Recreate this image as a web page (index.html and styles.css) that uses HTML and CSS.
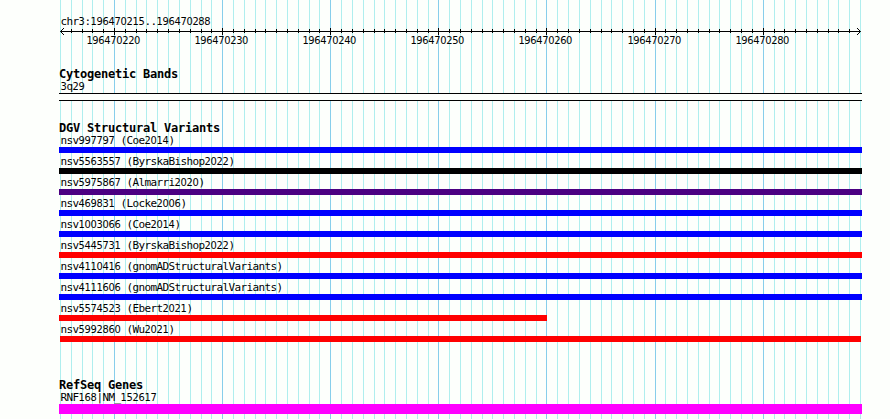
FILE: index.html
```html
<!DOCTYPE html>
<html lang="en">
<head>
    <meta charset="UTF-8">
    <title>chr3:196470215..196470288</title>
    <link rel="stylesheet" href="styles.css">
</head>
<body>
    <div class="browser">
        <svg class="grid" id="grid" width="890" height="419" shape-rendering="crispEdges"></svg>

        <div class="panel">
            <div class="region">chr<span class="num">3</span>:<span class="num">196470215</span>..<span class="num">196470288</span></div>
            <svg class="ruler" id="ruler" width="803" height="20">
                <path class="arrow" d="M1.5 4.5h800M5 1L1.5 4.5L5 8M798 1l3.5 3.5L798 8"/>
            </svg>

            <div class="track cytoband">
                <h2>Cytogenetic Bands</h2>
                <div class="label"><span class="num">3</span>q<span class="num">29</span></div>
                <div class="band"></div>
            </div>

            <div class="track variants">
                <h2>DGV Structural Variants</h2>
                <div class="label">nsv<span class="num">997797</span> (Coe<span class="num">2014</span>)</div>
                <div class="bar gain"></div>
                <div class="label">nsv<span class="num">5563557</span> (ByrskaBishop<span class="num">2022</span>)</div>
                <div class="bar other"></div>
                <div class="label">nsv<span class="num">5975867</span> (Almarri<span class="num">2020</span>)</div>
                <div class="bar inversion"></div>
                <div class="label">nsv<span class="num">469831</span> (Locke<span class="num">2006</span>)</div>
                <div class="bar gain"></div>
                <div class="label">nsv<span class="num">1003066</span> (Coe<span class="num">2014</span>)</div>
                <div class="bar gain"></div>
                <div class="label">nsv<span class="num">5445731</span> (ByrskaBishop<span class="num">2022</span>)</div>
                <div class="bar loss"></div>
                <div class="label">nsv<span class="num">4110416</span> (gnomADStructuralVariants)</div>
                <div class="bar gain"></div>
                <div class="label">nsv<span class="num">4111606</span> (gnomADStructuralVariants)</div>
                <div class="bar gain"></div>
                <div class="label">nsv<span class="num">5574523</span> (Ebert<span class="num">2021</span>)</div>
                <div class="bar loss partial"></div>
                <div class="label">nsv<span class="num">5992860</span> (Wu<span class="num">2021</span>)</div>
                <div class="bar loss inner"></div>
            </div>

            <div class="track genes">
                <h2>RefSeq Genes</h2>
                <div class="label">RNF<span class="num">168</span>|NM_<span class="num">152617</span></div>
                <div class="bar gene"></div>
            </div>
        </div>
    </div>

    <script src="ruler.js"></script>
</body>
</html>
```
FILE: styles.css
```css
body {
    margin: 0;
    background-color: #fdfffc;
    color: #000;
    font-family: "DejaVu Sans Mono", monospace;
    font-size: 11px;
}
.browser {
    position: relative;
    width: 890px;
    height: 419px;
    overflow: hidden;
}
.grid {
    position: absolute;
    top: 0;
    left: 0;
}
.minor {
    fill: #afeeee;
}
.major {
    fill: #87ceeb;
}
.panel {
    position: relative;
    width: 803px;
    padding: 14px 0 0 59px;
}
.region, .label {
    padding-left: 1.4px;
    letter-spacing: -0.62px;
    white-space: pre;
}
.region {
    height: 13px;
    line-height: 15px;
}
.label {
    height: 15px;
    line-height: 18px;
}
/* plain zeros, kept on the same 6px pitch */
.num {
    font-family: "DejaVu Sans Condensed", "DejaVu Sans", sans-serif;
    font-stretch: condensed;
    letter-spacing: -0.3px;
}
.ruler {
    display: block;
}
.ruler text {
    font-family: "DejaVu Sans Condensed", "DejaVu Sans", sans-serif;
    font-stretch: condensed;
    font-size: 11px;
}
.arrow {
    fill: none;
    stroke: #000;
    stroke-width: 1;
}
h2 {
    margin: 0;
    height: 12px;
    line-height: 16px;
    font-size: 12px;
    font-weight: bold;
    letter-spacing: -0.22px;
}
.cytoband {
    padding-top: 19px;
}
.band {
    height: 6px;
    background-color: #fdfffc;
    border-top: 1px solid #000;
    border-bottom: 1px solid #000;
}
.variants {
    padding-top: 19px;
}
.bar {
    height: 6px;
}
.gain {
    background-color: #0000ff;
}
.loss {
    background-color: #ff0000;
}
.inversion {
    background-color: #4b0082;
}
.other {
    background-color: #000;
}
.partial {
    width: 488px;
}
.inner {
    margin: 0 1px;
}
.genes {
    padding-top: 35px;
}
.gene {
    height: 10px;
    background-color: #ff00ff;
}
```
FILE: ruler.js
```js
const SVG_NS = 'http://www.w3.org/2000/svg';
const start = 196470215;
const end = 196470289;
const left = 60;
const width = 800;

const grid = document.getElementById('grid');
const ruler = document.getElementById('ruler');

function addRect(parent, x, y, height, className) {
    const rect = document.createElementNS(SVG_NS, 'rect');
    rect.setAttribute('x', x);
    rect.setAttribute('y', y);
    rect.setAttribute('width', 1);
    rect.setAttribute('height', height);
    if (className) rect.setAttribute('class', className);
    parent.appendChild(rect);
}

for (let pos = start; pos <= end; pos++) {
    const offset = Math.round((pos - start) * width / (end - start));
    const major = pos % 10 === 0;
    addRect(grid, left + offset, 0, 419, major ? 'major' : 'minor');

    if (pos > start && pos < end) {
        addRect(ruler, offset + 1, major ? 1 : 2, major ? 7 : 4);
    }
    if (major) {
        const text = document.createElementNS(SVG_NS, 'text');
        text.setAttribute('x', offset - 26.6);
        text.setAttribute('y', 17);
        text.setAttribute('textLength', 54);
        text.textContent = pos;
        ruler.appendChild(text);
    }
}
```
